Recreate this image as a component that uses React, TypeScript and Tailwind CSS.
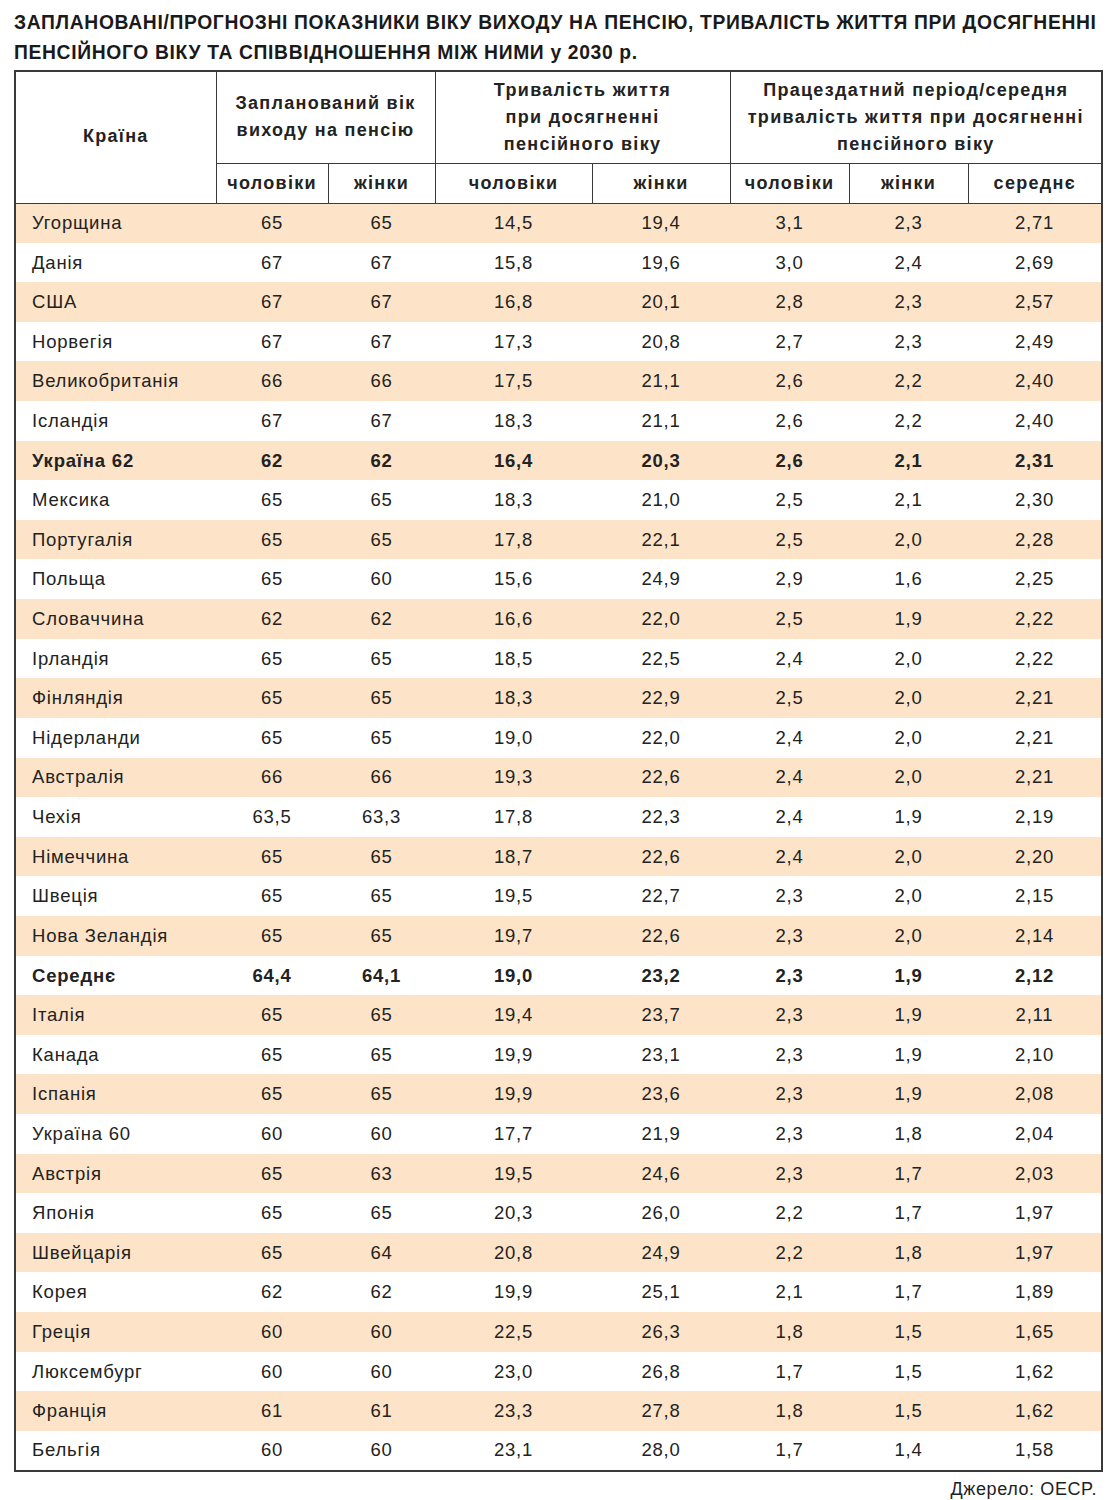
import React from 'react';

type Row = {
  country: string;
  bold?: boolean;
  values: string[];
};

const rows: Row[] = [
  { country: 'Угорщина', values: ['65', '65', '14,5', '19,4', '3,1', '2,3', '2,71'] },
  { country: 'Данія', values: ['67', '67', '15,8', '19,6', '3,0', '2,4', '2,69'] },
  { country: 'США', values: ['67', '67', '16,8', '20,1', '2,8', '2,3', '2,57'] },
  { country: 'Норвегія', values: ['67', '67', '17,3', '20,8', '2,7', '2,3', '2,49'] },
  { country: 'Великобританія', values: ['66', '66', '17,5', '21,1', '2,6', '2,2', '2,40'] },
  { country: 'Ісландія', values: ['67', '67', '18,3', '21,1', '2,6', '2,2', '2,40'] },
  { country: 'Україна 62', bold: true, values: ['62', '62', '16,4', '20,3', '2,6', '2,1', '2,31'] },
  { country: 'Мексика', values: ['65', '65', '18,3', '21,0', '2,5', '2,1', '2,30'] },
  { country: 'Португалія', values: ['65', '65', '17,8', '22,1', '2,5', '2,0', '2,28'] },
  { country: 'Польща', values: ['65', '60', '15,6', '24,9', '2,9', '1,6', '2,25'] },
  { country: 'Словаччина', values: ['62', '62', '16,6', '22,0', '2,5', '1,9', '2,22'] },
  { country: 'Ірландія', values: ['65', '65', '18,5', '22,5', '2,4', '2,0', '2,22'] },
  { country: 'Фінляндія', values: ['65', '65', '18,3', '22,9', '2,5', '2,0', '2,21'] },
  { country: 'Нідерланди', values: ['65', '65', '19,0', '22,0', '2,4', '2,0', '2,21'] },
  { country: 'Австралія', values: ['66', '66', '19,3', '22,6', '2,4', '2,0', '2,21'] },
  { country: 'Чехія', values: ['63,5', '63,3', '17,8', '22,3', '2,4', '1,9', '2,19'] },
  { country: 'Німеччина', values: ['65', '65', '18,7', '22,6', '2,4', '2,0', '2,20'] },
  { country: 'Швеція', values: ['65', '65', '19,5', '22,7', '2,3', '2,0', '2,15'] },
  { country: 'Нова Зеландія', values: ['65', '65', '19,7', '22,6', '2,3', '2,0', '2,14'] },
  { country: 'Середнє', bold: true, values: ['64,4', '64,1', '19,0', '23,2', '2,3', '1,9', '2,12'] },
  { country: 'Італія', values: ['65', '65', '19,4', '23,7', '2,3', '1,9', '2,11'] },
  { country: 'Канада', values: ['65', '65', '19,9', '23,1', '2,3', '1,9', '2,10'] },
  { country: 'Іспанія', values: ['65', '65', '19,9', '23,6', '2,3', '1,9', '2,08'] },
  { country: 'Україна 60', values: ['60', '60', '17,7', '21,9', '2,3', '1,8', '2,04'] },
  { country: 'Австрія', values: ['65', '63', '19,5', '24,6', '2,3', '1,7', '2,03'] },
  { country: 'Японія', values: ['65', '65', '20,3', '26,0', '2,2', '1,7', '1,97'] },
  { country: 'Швейцарія', values: ['65', '64', '20,8', '24,9', '2,2', '1,8', '1,97'] },
  { country: 'Корея', values: ['62', '62', '19,9', '25,1', '2,1', '1,7', '1,89'] },
  { country: 'Греція', values: ['60', '60', '22,5', '26,3', '1,8', '1,5', '1,65'] },
  { country: 'Люксембург', values: ['60', '60', '23,0', '26,8', '1,7', '1,5', '1,62'] },
  { country: 'Франція', values: ['61', '61', '23,3', '27,8', '1,8', '1,5', '1,62'] },
  { country: 'Бельгія', values: ['60', '60', '23,1', '28,0', '1,7', '1,4', '1,58'] },
];

const colWidths = [201, 112, 107, 157, 138, 119, 119, 134];

export default function App() {
  return (
    <div className="w-[1112px] h-[1500px] bg-white text-[#1f1f1f] font-['Liberation_Sans',Arial,sans-serif] px-[14px] pt-[8px]">
      <h1 className="text-[19.3px] leading-[30px] font-bold tracking-[0.66px] text-[#1a1a1a] mb-[2px] whitespace-nowrap">
        ЗАПЛАНОВАНІ/ПРОГНОЗНІ ПОКАЗНИКИ ВІКУ ВИХОДУ НА ПЕНСІЮ, ТРИВАЛІСТЬ ЖИТТЯ ПРИ ДОСЯГНЕННІ
        <br />
        ПЕНСІЙНОГО ВІКУ ТА СПІВВІДНОШЕННЯ МІЖ НИМИ у 2030 р.
      </h1>

      <table className="w-[1088px] border-collapse border-2 border-[#3a3a3a] table-fixed">
        <colgroup>
          {colWidths.map((w, i) => (
            <col key={i} style={{ width: w }} />
          ))}
        </colgroup>
        <thead className="font-bold text-[18px] tracking-[1.3px] text-[#222] leading-[27px]">
          <tr className="h-[92px]">
            <th rowSpan={2} className="border border-[#3a3a3a] font-bold text-center pb-[2px]">
              Країна
            </th>
            <th colSpan={2} className="border border-[#3a3a3a] font-bold text-center whitespace-nowrap">
              Запланований вік
              <br />
              виходу на пенсію
            </th>
            <th colSpan={2} className="border border-[#3a3a3a] font-bold text-center">
              Тривалість життя
              <br />
              при досягненні
              <br />
              пенсійного віку
            </th>
            <th colSpan={3} className="border border-[#3a3a3a] font-bold text-center whitespace-nowrap">
              Працездатний період/середня
              <br />
              тривалість життя при досягненні
              <br />
              пенсійного віку
            </th>
          </tr>
          <tr className="h-[40px]">
            {['чоловіки', 'жінки', 'чоловіки', 'жінки', 'чоловіки', 'жінки', 'середнє'].map((t, i) => (
              <th key={i} className="border border-[#3a3a3a] font-bold text-center">
                {t}
              </th>
            ))}
          </tr>
        </thead>
        <tbody className="text-[18.5px] tracking-[0.8px] text-[#222]">
          {rows.map((r, i) => (
            <tr
              key={r.country}
              className={`h-[39.62px] ${i % 2 === 0 ? 'bg-[#fde4c8]' : 'bg-white'} ${r.bold ? 'font-bold' : ''}`}
            >
              <td className="pl-[16px] text-left whitespace-nowrap">{r.country}</td>
              {r.values.map((v, j) => (
                <td key={j} className="text-center">
                  {v}
                </td>
              ))}
            </tr>
          ))}
        </tbody>
      </table>

      <div className="text-right text-[18px] tracking-[0.6px] text-[#222] pr-[1px] mt-[4px]">Джерело: OECP.</div>
    </div>
  );
}
